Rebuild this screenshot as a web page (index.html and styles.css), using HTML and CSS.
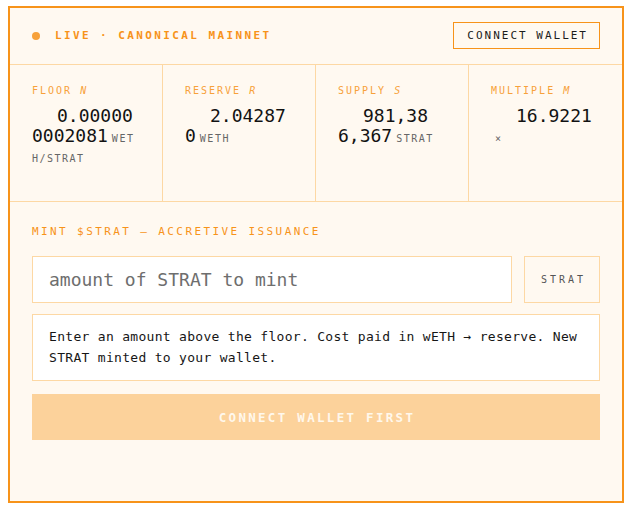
FILE: index.html
```html
<!DOCTYPE html>
<html lang="en">
<head>
<meta charset="utf-8">
<title>STRAT Mint</title>
<link rel="stylesheet" href="styles.css">
</head>
<body>
<main class="card">
  <header class="head">
    <div class="status"><span class="dot"></span><span class="status-text">LIVE · CANONICAL MAINNET</span></div>
    <button class="btn-outline">CONNECT WALLET</button>
  </header>
  <section class="stats">
    <div class="stat">
      <div class="label">FLOOR <i>N</i></div>
      <div class="value">0.000000002081<span class="unit">WETH/STRAT</span></div>
    </div>
    <div class="stat">
      <div class="label">RESERVE <i>R</i></div>
      <div class="value">2.042870<span class="unit">WETH</span></div>
    </div>
    <div class="stat">
      <div class="label">SUPPLY <i>S</i></div>
      <div class="value">981,386,367<span class="unit">STRAT</span></div>
    </div>
    <div class="stat">
      <div class="label">MULTIPLE <i>M</i></div>
      <div class="value">16.9221<span class="unit">×</span></div>
    </div>
  </section>
  <section class="mint">
    <div class="mint-label">MINT $STRAT — ACCRETIVE ISSUANCE</div>
    <div class="input-row">
      <input class="amount" type="text" placeholder="amount of STRAT to mint">
      <div class="suffix">STRAT</div>
    </div>
    <div class="info">Enter an amount above the floor. Cost paid in wETH → reserve. New STRAT minted to your wallet.</div>
    <button class="btn-primary">CONNECT WALLET FIRST</button>
  </section>
</main>
</body>
</html>
```
FILE: styles.css
```css
* { box-sizing: border-box; }
html, body { background: #ffffff; }
body {
  margin: 6px 5px 7px 8px;
  font-family: "DejaVu Sans Mono", "Liberation Mono", monospace;
  color: #161616;
}
.card {
  width: 616px;
  height: 497px;
  border: 2px solid #f7931a;
  background: #fff9f1;
  display: flex;
  flex-direction: column;
}
.head {
  height: 57px;
  flex: none;
  border-bottom: 1px solid #fdd8a4;
  display: flex;
  align-items: center;
  justify-content: space-between;
  padding: 0 22px 1px 22px;
}
.status { display: flex; align-items: center; }
.dot {
  width: 8px; height: 8px; border-radius: 50%;
  background: #f7a13a;
  margin-right: 15px;
}
.status-text {
  font-size: 11px;
  font-weight: bold;
  letter-spacing: 2.4px;
  color: #f7931a;
}
.btn-outline {
  font-family: inherit;
  font-size: 11px;
  line-height: 13px;
  letter-spacing: 2px;
  color: #1c1c1c;
  background: transparent;
  border: 1px solid #f7931a;
  padding: 6px 11px 6px 13px;
  margin: 0;
  height: 27px;
}
.stats {
  flex: none;
  display: grid;
  grid-template-columns: repeat(4, 1fr);
  border-bottom: 1px solid #fdd8a4;
}
.stat {
  min-height: 136px;
  padding: 18.5px 22px 10px 22px;
  border-right: 1px solid #fdd8a4;
}
.stat:last-child { border-right: none; }
.label {
  font-size: 10px;
  line-height: 14px;
  letter-spacing: 2px;
  color: #f7a13a;
  margin-bottom: 8px;
}
.label i { font-style: italic; }
.value {
  font-size: 18px;
  line-height: 20px;
  text-indent: 25px;
  word-break: break-all;
  color: #121212;
}
.unit {
  font-size: 10px;
  line-height: 12px;
  letter-spacing: 1.5px;
  color: #666666;
  margin-left: 4px;
}
.mint {
  flex: 1;
  padding: 23px 22px 0 22px;
  display: flex;
  flex-direction: column;
}
.mint-label {
  font-size: 11px;
  line-height: 14px;
  letter-spacing: 2.4px;
  color: #f7931a;
  margin-bottom: 17px;
}
.input-row {
  display: flex;
  gap: 12px;
  height: 47px;
  margin-bottom: 11px;
}
.amount {
  flex: 1;
  min-width: 0;
  height: 47px;
  margin: 0;
  border: 1px solid #fdd8a4;
  background: #ffffff;
  font-family: inherit;
  font-size: 18px;
  color: #161616;
  padding: 0 16px;
  outline: none;
}
.amount::placeholder { color: #6e6e6e; opacity: 1; }
.suffix {
  width: 76px;
  border: 1px solid #fdd8a4;
  display: flex;
  align-items: center;
  justify-content: center;
  font-size: 10px;
  letter-spacing: 3px;
  padding-left: 3px;
  color: #555555;
}
.info {
  background: #ffffff;
  border: 1px solid #fdd8a4;
  padding: 11px 16px 12px 16px;
  font-size: 13px;
  line-height: 21px;
  letter-spacing: 0.3px;
  color: #161616;
  margin-bottom: 13px;
}
.btn-primary {
  height: 46px;
  margin: 0;
  border: none;
  background: #fcd29b;
  color: #fff8ec;
  font-family: inherit;
  font-size: 12.5px;
  font-weight: bold;
  letter-spacing: 2.3px;
  padding: 0 0 0 2px;
}
```
